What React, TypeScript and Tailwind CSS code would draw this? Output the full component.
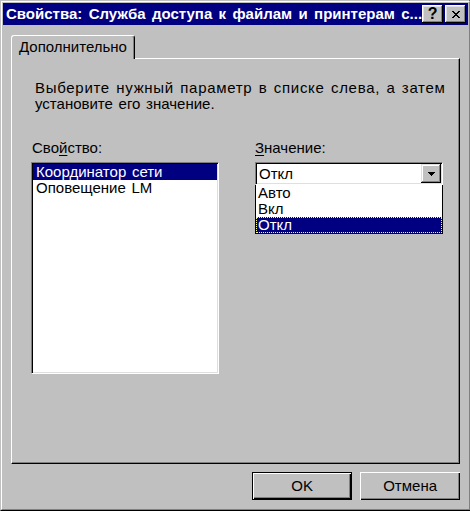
import React from "react";

const font = "font-['Liberation_Sans',Arial,sans-serif]";

function CloseGlyph() {
  const rows = [
    "XX....XX",
    ".XX..XX.",
    "..XXXX..",
    "...XX...",
    "..XXXX..",
    ".XX..XX.",
    "XX....XX",
  ];
  return (
    <svg width="8" height="7" viewBox="0 0 8 7" shapeRendering="crispEdges">
      {rows.flatMap((r, y) =>
        r.split("").map((c, x) => (c === "X" ? <rect key={`${x}-${y}`} x={x} y={y} width={1} height={1} fill="#000" /> : null))
      )}
    </svg>
  );
}

function ArrowGlyph() {
  return (
    <svg width="7" height="4" viewBox="0 0 7 4" shapeRendering="crispEdges">
      <rect x="0" y="0" width="7" height="1" fill="#000" />
      <rect x="1" y="1" width="5" height="1" fill="#000" />
      <rect x="2" y="2" width="3" height="1" fill="#000" />
      <rect x="3" y="3" width="1" height="1" fill="#000" />
    </svg>
  );
}

export default function App() {
  return (
    <div className={`${font} w-[470px] h-[511px] bg-[#c0c0c0] border border-t-[#c0c0c0] border-l-[#c0c0c0] border-r-black border-b-black flex text-[15px] text-black [word-spacing:1.5px]`}>
      <div className="flex-1 flex flex-col border border-t-white border-l-white border-r-[#808080] border-b-[#808080] p-px">
        {/* Title bar */}
        <div className="h-[22px] bg-[#000080] flex items-center pl-[3px] pr-[2px]">
          <div className="flex-1 text-white font-bold text-[15px] leading-[22px] whitespace-nowrap overflow-hidden [word-spacing:2.2px]">
            Свойства: Служба доступа к файлам и принтерам с...
          </div>
          <div className="flex gap-[2px]">
            <div className="w-[21px] h-[18px] bg-[#c0c0c0] flex items-center justify-center shadow-[inset_-1px_-1px_#000,inset_1px_1px_#fff,inset_-2px_-2px_#808080,inset_2px_2px_#dfdfdf] font-bold text-[16px] leading-none text-black">
              ?
            </div>
            <div className="w-[21px] h-[18px] bg-[#c0c0c0] flex items-center justify-center shadow-[inset_-1px_-1px_#000,inset_1px_1px_#fff,inset_-2px_-2px_#808080,inset_2px_2px_#dfdfdf]">
              <CloseGlyph />
            </div>
          </div>
        </div>

        {/* Body */}
        <div className="flex-1 flex flex-col px-[8px] pt-[10px] pb-[8px]">
          {/* Tab strip */}
          <div className="flex h-[23px]">
            <div className="relative z-10 w-[124px] h-[24px] bg-[#c0c0c0] border-l border-t border-white border-r border-r-black rounded-tl-[3px] rounded-tr-[3px] shadow-[inset_-1px_0_#808080] pl-[7px] leading-[22px]">
              Дополнительно
            </div>
          </div>

          {/* Panel */}
          <div className="h-[406px] border border-t-white border-l-white border-r-black border-b-black shadow-[inset_-1px_-1px_#808080] flex flex-col pt-[21px] pl-[19px]">
            <div className="pl-[4px] leading-[16px] whitespace-nowrap">
              <div className="tracking-[0.7px]">Выберите нужный параметр в списке слева, а затем</div>
              <div>установите его значение.</div>
            </div>

            <div className="flex gap-[36px] mt-[28px]">
              {/* Left column */}
              <div className="w-[188px] flex flex-col">
                <div className="leading-[16px] pl-[1px]">
                  Сво<span className="underline underline-offset-2">й</span>ство:
                </div>
                <div className="mt-[6px] h-[212px] bg-white border border-t-[#808080] border-l-[#808080] border-r-white border-b-white shadow-[inset_1px_1px_#000,inset_-1px_-1px_#dfdfdf] p-px">
                  <div className="h-[16px] leading-[16px] bg-[#000080] text-white pl-[3px] whitespace-nowrap">Координатор сети</div>
                  <div className="h-[16px] leading-[16px] pl-[3px] whitespace-nowrap">Оповещение LM</div>
                </div>
              </div>

              {/* Right column */}
              <div className="w-[188px] flex flex-col">
                <div className="leading-[16px]">
                  <span className="underline underline-offset-2">З</span>начение:
                </div>
                <div className="mt-[6px] h-[23px] bg-white border border-t-[#808080] border-l-[#808080] border-r-white border-b-white shadow-[inset_1px_1px_#000,inset_-1px_-1px_#dfdfdf] p-px flex">
                  <div className="flex-1 pl-[2px] leading-[19px]">Откл</div>
                  <div className="w-[20px] h-[19px] bg-[#c0c0c0] flex items-center justify-center shadow-[inset_-1px_-1px_#000,inset_1px_1px_#dfdfdf,inset_-2px_-2px_#808080,inset_2px_2px_#fff]">
                    <ArrowGlyph />
                  </div>
                </div>
                <div className="h-[49px] bg-white border border-black border-t-0 flex flex-col">
                  <div className="h-[16px] leading-[16px] pl-[2px]">Авто</div>
                  <div className="h-[16px] leading-[16px] pl-[2px]">Вкл</div>
                  <div className="h-[16px] leading-[14px] bg-[#000080] text-white border border-dotted border-[#ffff80] pl-px">Откл</div>
                </div>
              </div>
            </div>
          </div>

          {/* Buttons */}
          <div className="flex justify-end gap-[8px] mt-[8px]">
            <div className="w-[100px] h-[28px] border border-black shadow-[inset_1px_1px_#fff,inset_-1px_-1px_#000,inset_-2px_-2px_#808080] flex items-center justify-center">
              OK
            </div>
            <div className="w-[100px] h-[28px] shadow-[inset_1px_1px_#fff,inset_-1px_-1px_#000,inset_-2px_-2px_#808080] flex items-center justify-center">
              Отмена
            </div>
          </div>
        </div>
      </div>
    </div>
  );
}
